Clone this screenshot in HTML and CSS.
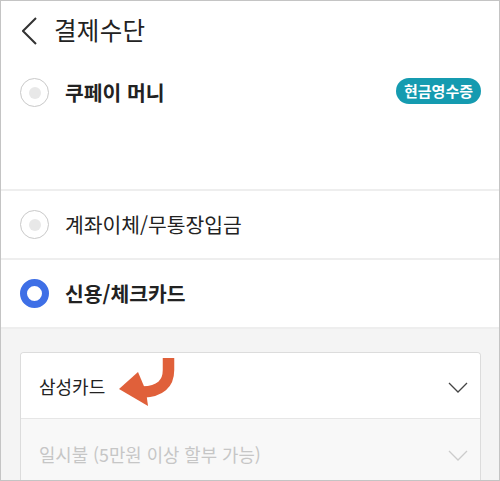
FILE: index.html
```html
<!DOCTYPE html>
<html lang="ko">
<head>
<meta charset="utf-8">
<link rel="stylesheet" href="styles.css">
</head>
<body>
<div class="frame">
  <header class="header">
    <svg class="back" width="16" height="28" viewBox="0 0 16 28"><polyline points="14,1 1,14 14,27" fill="none" stroke="#333" stroke-width="2"/></svg>
    <h1 class="title">결제수단</h1>
  </header>
  <div class="row row-first">
    <span class="radio"></span>
    <span class="label bold">쿠페이 머니</span>
    <span class="badge">현금영수증</span>
  </div>
  <div class="row">
    <span class="radio"></span>
    <span class="label">계좌이체/무통장입금</span>
  </div>
  <div class="row">
    <span class="radio on"></span>
    <span class="label bold">신용/체크카드</span>
  </div>
  <div class="panel">
    <div class="select-group">
      <div class="select">
        <span class="sel-text">삼성카드</span>
        <svg class="chev" width="20" height="11" viewBox="0 0 20 11"><polyline points="1,1 10,10 19,1" fill="none" stroke="#444" stroke-width="1.3"/></svg>
      </div>
      <div class="select disabled">
        <span class="sel-text">일시불 (5만원 이상 할부 가능)</span>
        <svg class="chev" width="20" height="11" viewBox="0 0 20 11"><polyline points="1,1 10,10 19,1" fill="none" stroke="#ccc" stroke-width="1.3"/></svg>
      </div>
    </div>
    <svg class="annot" width="70" height="60" viewBox="0 0 70 60">
      <path d="M49.5,0 L49.5,12 Q49.5,33 24,34" fill="none" stroke="#e0603a" stroke-width="11.5"/>
      <polygon points="0,31 19,14 27,33 29,48" fill="#e0603a"/>
    </svg>
  </div>
</div>
</body>
</html>
```
FILE: styles.css
```css
* { box-sizing: border-box; margin: 0; padding: 0; }
html, body { width: 500px; height: 481px; overflow: hidden; background: #fff; }
body { font-family: "Noto Sans CJK KR", "Noto Sans", sans-serif; color: #222; }
.frame {
  width: 500px; height: 481px;
  border: 1px solid #c4c4c4;
  display: flex; flex-direction: column;
  overflow: hidden;
}
.header {
  flex: none;
  height: 59px;
  display: flex; align-items: center;
  padding-left: 21px;
}
.back { display: block; margin-right: 16px; margin-top: 0; }
.title { font-size: 24.5px; font-weight: 400; color: #222; letter-spacing: 0.3px; margin-top: -2px; }
.row {
  flex: none;
  height: 69px;
  display: flex; align-items: center;
  padding: 0 18px 0 19px;
  border-bottom: 2px solid #eeeeee;
}
.row-first { height: 131px; align-items: flex-start; padding-top: 18px; }
.radio {
  width: 29px; height: 29px; border-radius: 50%;
  border: 1.5px solid #c9c9c9;
  display: flex; align-items: center; justify-content: center;
  flex: none;
  margin-right: 16px;
}
.radio::after {
  content: ""; width: 12px; height: 12px; border-radius: 50%; background: #e8e8e8;
}
.radio.on { border: 7px solid #3e6fe6; }
.radio.on::after { background: #fff; width: 13px; height: 13px; }
.label { font-size: 20.4px; color: #222; line-height: 29px; }
.bold { font-weight: 700; }
.badge {
  margin-left: auto;
  margin-top: 0;
  height: 26px; padding: 0 8px;
  border-radius: 13px;
  background: #159bb0; color: #fff;
  font-size: 15px; font-weight: 700;
  line-height: 26px;
}
.panel {
  flex: 1;
  background: #f4f4f4;
  padding: 23px 18px 0 19px;
  position: relative;
}
.select-group {
  border: 1px solid #dcdcdc;
  border-bottom: none;
  border-radius: 4px 4px 0 0;
  overflow: hidden;
}
.select {
  height: 66px;
  background: #fff;
  display: flex; align-items: center;
  padding: 0 12px 0 18px;
  border-bottom: 1px solid #e6e6e6;
}
.select.disabled { background: #f8f8f8; height: 70px; border-bottom: none; }
.sel-text { font-size: 18px; color: #222; }
.disabled .sel-text { color: #c6c6c6; font-size: 17.8px; }
.chev { margin-left: auto; display: block; margin-top: 3px; }
.annot { position: absolute; left: 118px; top: 29px; }
```
